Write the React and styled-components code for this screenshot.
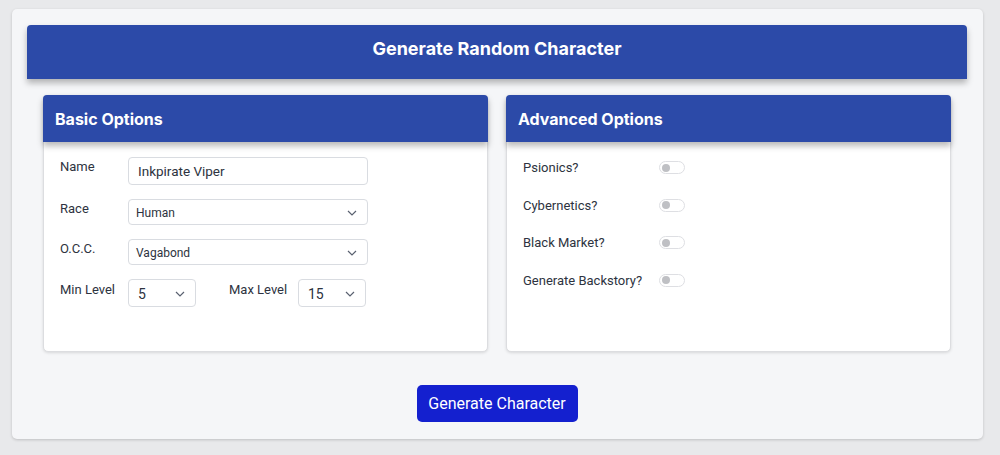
import styled, { createGlobalStyle } from "styled-components";

const GlobalStyle = createGlobalStyle`
  html, body {
    margin: 0;
    padding: 0;
    background: #e8e9eb;
    font-family: Roboto, "Noto Sans", sans-serif;
    color: #2d3340;
  }
`;

const Page = styled.div`
  padding: 9px 17px 17px 12px;
`;

const Shell = styled.div`
  background: #f5f6f8;
  border-radius: 5px;
  box-shadow: 0 1px 3px rgba(0, 0, 0, 0.18);
  padding: 16px 16px 17px 15px;
`;

const TitleBar = styled.div`
  height: 54px;
  box-sizing: border-box;
  padding-bottom: 7px;
  background: #2c4aa8;
  border-radius: 4px 4px 0 0;
  box-shadow: 0 4px 6px rgba(0, 0, 0, 0.28);
  display: flex;
  align-items: center;
  justify-content: center;
  color: #fff;
  font-family: Inter, "Noto Sans", sans-serif;
  font-size: 18px;
  font-weight: 700;
`;

const Columns = styled.div`
  display: grid;
  grid-template-columns: 445px 445px;
  column-gap: 18px;
  padding: 16px 16px 0 16px;
`;

const Card = styled.div`
  height: 257px;
  background: #fff;
  border-radius: 5px;
  border: 1px solid #dcdde0;
  box-shadow: 0 1px 3px rgba(0, 0, 0, 0.12);
  box-sizing: border-box;
  display: flex;
  flex-direction: column;
`;

const CardHeader = styled.div`
  height: 47px;
  margin: -1px -1px 0 -1px;
  background: #2c4aa8;
  border-radius: 4px 4px 0 0;
  box-shadow: 0 4px 6px rgba(0, 0, 0, 0.28);
  display: flex;
  align-items: center;
  padding-left: 12px;
  color: #fff;
  font-family: Inter, "Noto Sans", sans-serif;
  font-size: 16px;
  font-weight: 700;
`;

const FormBody = styled.div`
  padding: 15px 16px;
  display: flex;
  flex-direction: column;
  gap: 14px;
`;

const FieldRow = styled.div`
  display: flex;
  align-items: flex-start;
`;

const Label = styled.label`
  width: ${(p) => p.$w || 68}px;
  padding-top: ${(p) => p.$top || 2}px;
  font-size: 13px;
  color: #2d3340;
`;

const TextInput = styled.div`
  width: 240px;
  height: 28px;
  box-sizing: border-box;
  border: 1px solid #d9dce1;
  border-radius: 4px;
  display: flex;
  align-items: center;
  padding-left: 9px;
  font-size: 13.5px;
  color: #2d3340;
`;

const Select = styled.div`
  width: ${(p) => p.$w || 240}px;
  height: ${(p) => p.$h || 26}px;
  box-sizing: border-box;
  border: 1px solid #d9dce1;
  border-radius: 4px;
  display: flex;
  align-items: center;
  justify-content: space-between;
  padding: ${(p) => (p.$small ? "2px 10px 0 9px" : "1px 10px 0 7px")};
  font-size: ${(p) => (p.$small ? 14 : 12)}px;
  color: #2d3340;
`;

const Chevron = () => (
  <svg width="10" height="6" viewBox="0 0 10 6">
    <path d="M1 1l4 4 4-4" fill="none" stroke="#5a6170" strokeWidth="1.2" />
  </svg>
);

const Gap = styled.div`
  width: ${(p) => p.$w}px;
`;

const ToggleBody = styled.div`
  padding: 16px 16px;
  display: flex;
  flex-direction: column;
  gap: 18.5px;
`;

const ToggleRow = styled.div`
  display: flex;
  align-items: center;
  height: 19px;
`;

const ToggleLabel = styled.span`
  width: 136px;
  font-size: 13px;
  color: #2d3340;
`;

const Switch = styled.div`
  width: 26px;
  height: 13px;
  box-sizing: border-box;
  border: 1px solid #dedfe3;
  border-radius: 7px;
  background: #fff;
  display: flex;
  align-items: center;
  padding-left: 2px;

  &::before {
    content: "";
    width: 8px;
    height: 8px;
    border-radius: 50%;
    background: #bfc0c4;
  }
`;

const Footer = styled.div`
  display: flex;
  justify-content: center;
  padding-top: 33px;
`;

const Button = styled.button`
  width: 161px;
  height: 37px;
  border: none;
  border-radius: 5px;
  background: #1420cf;
  color: #fff;
  font-family: Roboto, "Noto Sans", sans-serif;
  font-size: 16px;
`;

const toggles = ["Psionics?", "Cybernetics?", "Black Market?", "Generate Backstory?"];

export default function App() {
  return (
    <>
      <GlobalStyle />
      <Page>
        <Shell>
          <TitleBar>Generate Random Character</TitleBar>
          <Columns>
            <Card>
              <CardHeader>Basic Options</CardHeader>
              <FormBody>
                <FieldRow>
                  <Label $top={2}>Name</Label>
                  <TextInput>Inkpirate Viper</TextInput>
                </FieldRow>
                <FieldRow>
                  <Label>Race</Label>
                  <Select>
                    Human
                    <Chevron />
                  </Select>
                </FieldRow>
                <FieldRow>
                  <Label>O.C.C.</Label>
                  <Select>
                    Vagabond
                    <Chevron />
                  </Select>
                </FieldRow>
                <FieldRow>
                  <Label $top={3}>Min Level</Label>
                  <Select $w={68} $h={28} $small>
                    5
                    <Chevron />
                  </Select>
                  <Gap $w={33} />
                  <Label $w={69} $top={3}>Max Level</Label>
                  <Select $w={68} $h={28} $small>
                    15
                    <Chevron />
                  </Select>
                </FieldRow>
              </FormBody>
            </Card>
            <Card>
              <CardHeader>Advanced Options</CardHeader>
              <ToggleBody>
                {toggles.map((t) => (
                  <ToggleRow key={t}>
                    <ToggleLabel>{t}</ToggleLabel>
                    <Switch />
                  </ToggleRow>
                ))}
              </ToggleBody>
            </Card>
          </Columns>
          <Footer>
            <Button>Generate Character</Button>
          </Footer>
        </Shell>
      </Page>
    </>
  );
}
